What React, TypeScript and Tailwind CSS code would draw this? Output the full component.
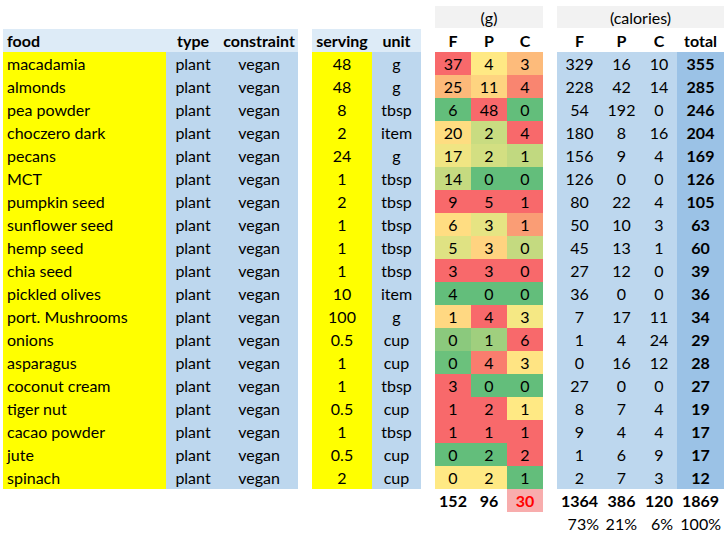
import React from "react";

const R = "#f8696b";
const G = "#63be7b";
const Y = "#ffe984";

type Row = {
  food: string;
  serving: string;
  unit: string;
  g: [number, number, number];
  gc: [string, string, string];
  cal: [number, number, number, number];
};

const rows: Row[] = [
  { food: "macadamia", serving: "48", unit: "g", g: [37, 4, 3], gc: [R, Y, "#fdbb7b"], cal: [329, 16, 10, 355] },
  { food: "almonds", serving: "48", unit: "g", g: [25, 11, 4], gc: ["#fcb97a", "#fed480", "#f98570"], cal: [228, 42, 14, 285] },
  { food: "pea powder", serving: "8", unit: "tbsp", g: [6, 48, 0], gc: [G, R, G], cal: [54, 192, 0, 246] },
  { food: "choczero dark", serving: "2", unit: "item", g: [20, 2, 4], gc: ["#fedd81", "#c9dc81", R], cal: [180, 8, 16, 204] },
  { food: "pecans", serving: "24", unit: "g", g: [17, 2, 1], gc: ["#f0e583", "#d3df82", "#c1d980"], cal: [156, 9, 4, 169] },
  { food: "MCT", serving: "1", unit: "tbsp", g: [14, 0, 0], gc: ["#c5da80", G, G], cal: [126, 0, 0, 126] },
  { food: "pumpkin seed", serving: "2", unit: "tbsp", g: [9, 5, 1], gc: [R, R, R], cal: [80, 22, 4, 105] },
  { food: "sunflower seed", serving: "1", unit: "tbsp", g: [6, 3, 1], gc: ["#ffdd82", "#e6e483", "#fa9d75"], cal: [50, 10, 3, 63] },
  { food: "hemp seed", serving: "1", unit: "tbsp", g: [5, 3, 0], gc: ["#dfe283", "#ffd380", "#c4da80"], cal: [45, 13, 1, 60] },
  { food: "chia seed", serving: "1", unit: "tbsp", g: [3, 3, 0], gc: [R, R, R], cal: [27, 12, 0, 39] },
  { food: "pickled olives", serving: "10", unit: "item", g: [4, 0, 0], gc: [G, G, G], cal: [36, 0, 0, 36] },
  { food: "port. Mushrooms", serving: "100", unit: "g", g: [1, 4, 3], gc: ["#ffd882", R, "#f5e884"], cal: [7, 17, 11, 34] },
  { food: "onions", serving: "0.5", unit: "cup", g: [0, 1, 6], gc: ["#8bc97d", "#a0cf7e", R], cal: [1, 4, 24, 29] },
  { food: "asparagus", serving: "1", unit: "cup", g: [0, 4, 3], gc: ["#6bc17c", "#f97d6e", "#ffe483"], cal: [0, 16, 12, 28] },
  { food: "coconut cream", serving: "1", unit: "tbsp", g: [3, 0, 0], gc: [R, G, G], cal: [27, 0, 0, 27] },
  { food: "tiger nut", serving: "0.5", unit: "cup", g: [1, 2, 1], gc: [R, R, Y], cal: [8, 7, 4, 19] },
  { food: "cacao powder", serving: "1", unit: "tbsp", g: [1, 1, 1], gc: [R, R, R], cal: [9, 4, 4, 17] },
  { food: "jute", serving: "0.5", unit: "cup", g: [0, 2, 2], gc: [G, G, R], cal: [1, 6, 9, 17] },
  { food: "spinach", serving: "2", unit: "cup", g: [0, 2, 1], gc: [Y, Y, G], cal: [2, 7, 3, 12] },
];

const Gap = () => <div className="w-[14px] shrink-0" />;

export default function App() {
  return (
    <div
      className="w-[728px] h-[539px] bg-white text-black text-[16px] leading-[24px] pt-[6px] pl-[3px]"
      style={{ fontFamily: "Lato, 'Liberation Sans', sans-serif" }}
    >
      {/* group header row */}
      <div className="flex h-[23px]">
        <div className="w-[295px]" />
        <Gap />
        <div className="w-[109px]" />
        <Gap />
        <div className="w-[108px] h-[22px] bg-[#f2f2f2] text-center leading-[23px]">(g)</div>
        <Gap />
        <div className="w-[167px] h-[22px] bg-[#f2f2f2] text-center leading-[23px]">(calories)</div>
      </div>
      {/* header row */}
      <div className="flex h-[23px] font-bold">
        <div className="w-[163px] bg-[#ddebf7] pl-[4px]">food</div>
        <div className="w-[54px] bg-[#ddebf7] text-center">type</div>
        <div className="w-[78px] bg-[#ddebf7] text-center">constraint</div>
        <Gap />
        <div className="w-[60px] bg-[#ddebf7] text-center">serving</div>
        <div className="w-[49px] bg-[#ddebf7] text-center">unit</div>
        <Gap />
        <div className="w-[36px] text-center">F</div>
        <div className="w-[36px] text-center">P</div>
        <div className="w-[36px] text-center">C</div>
        <Gap />
        <div className="w-[45px] text-center">F</div>
        <div className="w-[39px] text-center">P</div>
        <div className="w-[36px] text-center">C</div>
        <div className="w-[47px] text-center">total</div>
      </div>
      {rows.map((r) => (
        <div key={r.food} className="flex h-[23px]">
          <div className="w-[163px] bg-[#ffff00] pl-[4px]">{r.food}</div>
          <div className="w-[54px] bg-[#bdd7ee] text-center">plant</div>
          <div className="w-[78px] bg-[#bdd7ee] text-center">vegan</div>
          <Gap />
          <div className="w-[60px] bg-[#ffff00] text-center">{r.serving}</div>
          <div className="w-[49px] bg-[#bdd7ee] text-center">{r.unit}</div>
          <Gap />
          {r.g.map((v, i) => (
            <div key={i} className="w-[36px] text-center" style={{ backgroundColor: r.gc[i] }}>
              {v}
            </div>
          ))}
          <Gap />
          <div className="w-[45px] bg-[#bdd7ee] text-center">{r.cal[0]}</div>
          <div className="w-[39px] bg-[#bdd7ee] text-center">{r.cal[1]}</div>
          <div className="w-[36px] bg-[#bdd7ee] text-center">{r.cal[2]}</div>
          <div className="w-[47px] bg-[#9bc2e6] text-center font-bold">{r.cal[3]}</div>
        </div>
      ))}
      {/* totals */}
      <div className="flex h-[23px] font-bold">
        <div className="w-[295px]" />
        <Gap />
        <div className="w-[109px]" />
        <Gap />
        <div className="w-[36px] text-center">152</div>
        <div className="w-[36px] text-center">96</div>
        <div className="w-[36px] text-center bg-[#f8adad] text-[#ff0000]">30</div>
        <Gap />
        <div className="w-[45px] text-center">1364</div>
        <div className="w-[39px] text-center">386</div>
        <div className="w-[36px] text-center">120</div>
        <div className="w-[47px] text-center">1869</div>
      </div>
      <div className="flex h-[23px]">
        <div className="w-[295px]" />
        <Gap />
        <div className="w-[109px]" />
        <Gap />
        <div className="w-[108px]" />
        <Gap />
        <div className="w-[45px] text-right pr-[3px]">73%</div>
        <div className="w-[39px] text-right pr-[4px]">21%</div>
        <div className="w-[36px] text-right pr-[4px]">6%</div>
        <div className="w-[47px] text-right pr-[3px]">100%</div>
      </div>
    </div>
  );
}
